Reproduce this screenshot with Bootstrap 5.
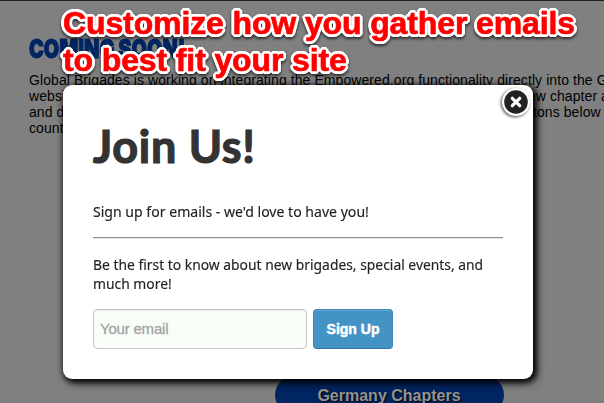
<!DOCTYPE html>
<html lang="en">
<head>
<meta charset="utf-8">
<meta name="viewport" content="width=device-width, initial-scale=1">
<title>Join Us</title>
<link rel="stylesheet" href="https://cdn.jsdelivr.net/npm/bootstrap@5.3.0/dist/css/bootstrap.min.css">
<style>
body{width:604px;height:403px;background:#808080;font-family:"Liberation Sans",Arial,sans-serif;color:#000}
.page-wrap{height:403px;border-top:1px solid #231f20;padding-left:29px}
.page-title{font:900 26px/26px Inter,sans-serif;color:#002561;margin:35px 0 0;white-space:nowrap;-webkit-text-stroke:1px #002561}
.squeeze{display:inline-block;transform-origin:0 50%}
.page-title .squeeze{transform:scaleX(.765)}
.intro{font-size:14px;line-height:16px;margin-top:10px;white-space:nowrap;letter-spacing:.08px}
.lead-in{display:inline-block;width:491px;overflow:hidden;vertical-align:top}
.lead-in-wide{width:500px}
.chapter-btn{width:229px;height:38px;border-radius:19px;background:#002561;color:#939393;font-size:16px;font-weight:700;text-shadow:1px 1px 2px #000;left:275px;top:376px;padding-right:1px;padding-top:2px}
.popup{left:63px;top:85px;width:470px;height:294px;border-radius:9px;padding:0 30px;box-shadow:2px 2px 6px 1px #000,3px 3px 10px rgba(0,0,0,.65);color:#222}
.popup h1{font:700 45px/58px Lato,sans-serif;color:#333;margin:32px 0 0;white-space:nowrap}
.popup h1 .squeeze{-webkit-text-stroke:1.2px #333;letter-spacing:.7px}
.copy{font:15px/19px "Noto Sans",sans-serif;white-space:nowrap;margin:0}
.copy .squeeze{transform:scaleX(.924);-webkit-text-stroke:.15px #222}
.copy-first{margin-top:27px}
.copy-first .squeeze{transform:scaleX(.938)}
.rule{border-top:1px solid #8f8f8f;border-bottom:1px solid #e6e6e6;height:2px;margin-top:16px}
.email-box{width:214px;height:40px;border:1px solid #c8c8c8;border-radius:4px;background:#f8fdf8;padding:0 6px 2px;font:15px "Liberation Sans",sans-serif;letter-spacing:-.2px;box-shadow:inset 0 1px 1px #e6e6e6}
.email-box::placeholder{color:#a3a3a3;opacity:1;-webkit-text-stroke:.3px #a3a3a3}
.signup{width:80px;height:40px;border:1px solid #3b86b7;border-bottom-color:#3277a5;border-radius:4px;background:#4393c5;color:#fff;font:700 14px "Liberation Sans",sans-serif;padding:0;margin-left:6px;box-shadow:inset 0 1px 0 #62a8d3;-webkit-text-stroke:.5px #fff}
.close-mark{left:438px;top:2px;width:30px;height:30px;filter:drop-shadow(-1px 1px 1.5px rgba(0,0,0,.7))}
.callout-text{left:63px;top:5px;font-size:32px;line-height:37px;font-weight:700;letter-spacing:-.12px;color:#f00;white-space:nowrap;-webkit-text-stroke:.7px #f00;text-shadow:3px 0 #fff,-3px 0 #fff,0 3px #fff,0 -3px #fff,2px 2px #fff,-2px 2px #fff,2px -2px #fff,-2px -2px #fff,3px 1px #fff,-3px 1px #fff,3px -1px #fff,-3px -1px #fff,1px 3px #fff,-1px 3px #fff,1px -3px #fff,-1px -3px #fff;filter:drop-shadow(0 2px 1.5px rgba(0,0,0,.65))}
</style>
</head>
<body class="overflow-hidden position-relative">
<main class="page-wrap">
  <h2 class="page-title"><span class="squeeze">COMING SOON!</span></h2>
  <p class="intro">Global Brigades is working on integrating the Empowered.org functionality directly into the G<br><span class="lead-in">website.</span>new chapter a<br><span class="lead-in lead-in-wide">and donate</span>ttons below<br>country.</p>
</main>
<a class="chapter-btn position-absolute d-flex align-items-center justify-content-center text-decoration-none">Germany Chapters</a>
<section class="popup position-absolute bg-white">
  <h1><span class="squeeze">Join Us!</span></h1>
  <p class="copy copy-first"><span class="squeeze">Sign up for emails - we'd love to have you!</span></p>
  <div class="rule"></div>
  <p class="copy mt-3"><span class="squeeze">Be the first to know about new brigades, special events, and<br>much more!</span></p>
  <form class="d-flex mt-3">
    <input class="email-box" type="email" placeholder="Your email">
    <button class="signup btn" type="button">Sign Up</button>
  </form>
  <svg class="close-mark position-absolute" viewBox="0 0 30 30"><circle cx="15" cy="15" r="14" fill="#fff"/><circle cx="15" cy="15" r="11.8" fill="#222"/><path d="M11.3 11.3l7.4 7.4M18.7 11.3l-7.4 7.4" stroke="#fff" stroke-width="3.2" stroke-linecap="round"/></svg>
</section>
<div class="callout-text position-absolute">Customize how you gather emails<br>to best fit your site</div>
<script src="https://cdn.jsdelivr.net/npm/bootstrap@5.3.0/dist/js/bootstrap.bundle.min.js"></script>
</body>
</html>
